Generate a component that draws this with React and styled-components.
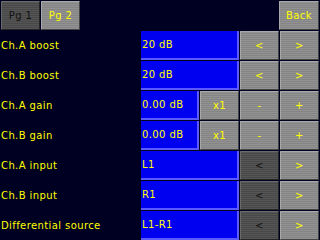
import styled, { createGlobalStyle, css } from "styled-components";

const GlobalStyle = createGlobalStyle`
  html, body {
    margin: 0;
    padding: 0;
    background: #000022;
  }
`;

const Screen = styled.div`
  width: 320px;
  height: 240px;
  background: #000022;
  font-family: "DejaVu Sans", "Liberation Sans", sans-serif;
  font-size: 10px;
  letter-spacing: 0.4px;
  color: #ffff00;
  overflow: hidden;
  display: flex;
  flex-direction: column;
`;

const TopBar = styled.div`
  height: 30px;
  display: flex;
  padding: 1px 1px 0 1px;
  box-sizing: border-box;
  gap: 1px;
`;

const Spacer = styled.div`
  flex: 1;
`;

const metal = css`
  background:
    repeating-linear-gradient(
      0deg,
      rgba(255, 255, 255, 0.05) 0px,
      rgba(255, 255, 255, 0.05) 1px,
      rgba(0, 0, 0, 0.05) 1px,
      rgba(0, 0, 0, 0.05) 2px
    ),
    ${(p) => (p.dark ? "#4c4c4c" : "#8c8c8c")};
`;

const Button = styled.button`
  ${metal}
  width: ${(p) => p.w || 39}px;
  height: 29px;
  box-sizing: border-box;
  margin: 0;
  padding: 0;
  border: 1px solid;
  border-color: ${(p) =>
    p.dark ? "#6a6a6a #262626 #262626 #6a6a6a" : "#a8a8a8 #444 #444 #a8a8a8"};
  border-radius: 1px;
  font-family: inherit;
  font-size: 10px;
  letter-spacing: 0.4px;
  color: ${(p) => (p.dim ? "#111" : "#ffff00")};
  display: flex;
  align-items: center;
  justify-content: center;
`;

const Row = styled.div`
  height: 30px;
  display: flex;
  align-items: flex-end;
  gap: 1px;
  box-sizing: border-box;
`;

const Label = styled.div`
  width: 139px;
  height: 29px;
  padding-left: 1px;
  display: flex;
  align-items: center;
  white-space: nowrap;
`;

const Field = styled.div`
  width: ${(p) => p.w}px;
  height: 29px;
  box-sizing: border-box;
  background: #0000f0;
  border-right: 2px solid #5a5aff;
  border-bottom: 2px solid #5a5aff;
  padding-left: 1px;
  display: flex;
  align-items: center;
  white-space: nowrap;
`;

const rows = [
  { label: "Ch.A boost", value: "20 dB", buttons: [{ t: "<" }, { t: ">" }] },
  { label: "Ch.B boost", value: "20 dB", buttons: [{ t: "<" }, { t: ">" }] },
  { label: "Ch.A gain", value: "0.00 dB", buttons: [{ t: "x1" }, { t: "-" }, { t: "+" }] },
  { label: "Ch.B gain", value: "0.00 dB", buttons: [{ t: "x1" }, { t: "-" }, { t: "+" }] },
  { label: "Ch.A input", value: "L1", buttons: [{ t: "<", dark: true, dim: true }, { t: ">" }] },
  { label: "Ch.B input", value: "R1", buttons: [{ t: "<", dark: true, dim: true }, { t: ">" }] },
  { label: "Differential source", value: "L1-R1", buttons: [{ t: "<", dark: true, dim: true }, { t: ">" }] },
];

export default function App() {
  return (
    <Screen>
      <GlobalStyle />
      <TopBar>
        <Button dark dim w={39}>Pg 1</Button>
        <Button w={39}>Pg 2</Button>
        <Spacer />
        <Button w={40}>Back</Button>
      </TopBar>
      {rows.map((r) => (
        <Row key={r.label}>
          <Label>{r.label}</Label>
          <Field w={r.buttons.length === 3 ? 58 : 98}>{r.value}</Field>
          {r.buttons.map((b, i) => (
            <Button key={i} dark={b.dark} dim={b.dim}>
              {b.t}
            </Button>
          ))}
        </Row>
      ))}
    </Screen>
  );
}
